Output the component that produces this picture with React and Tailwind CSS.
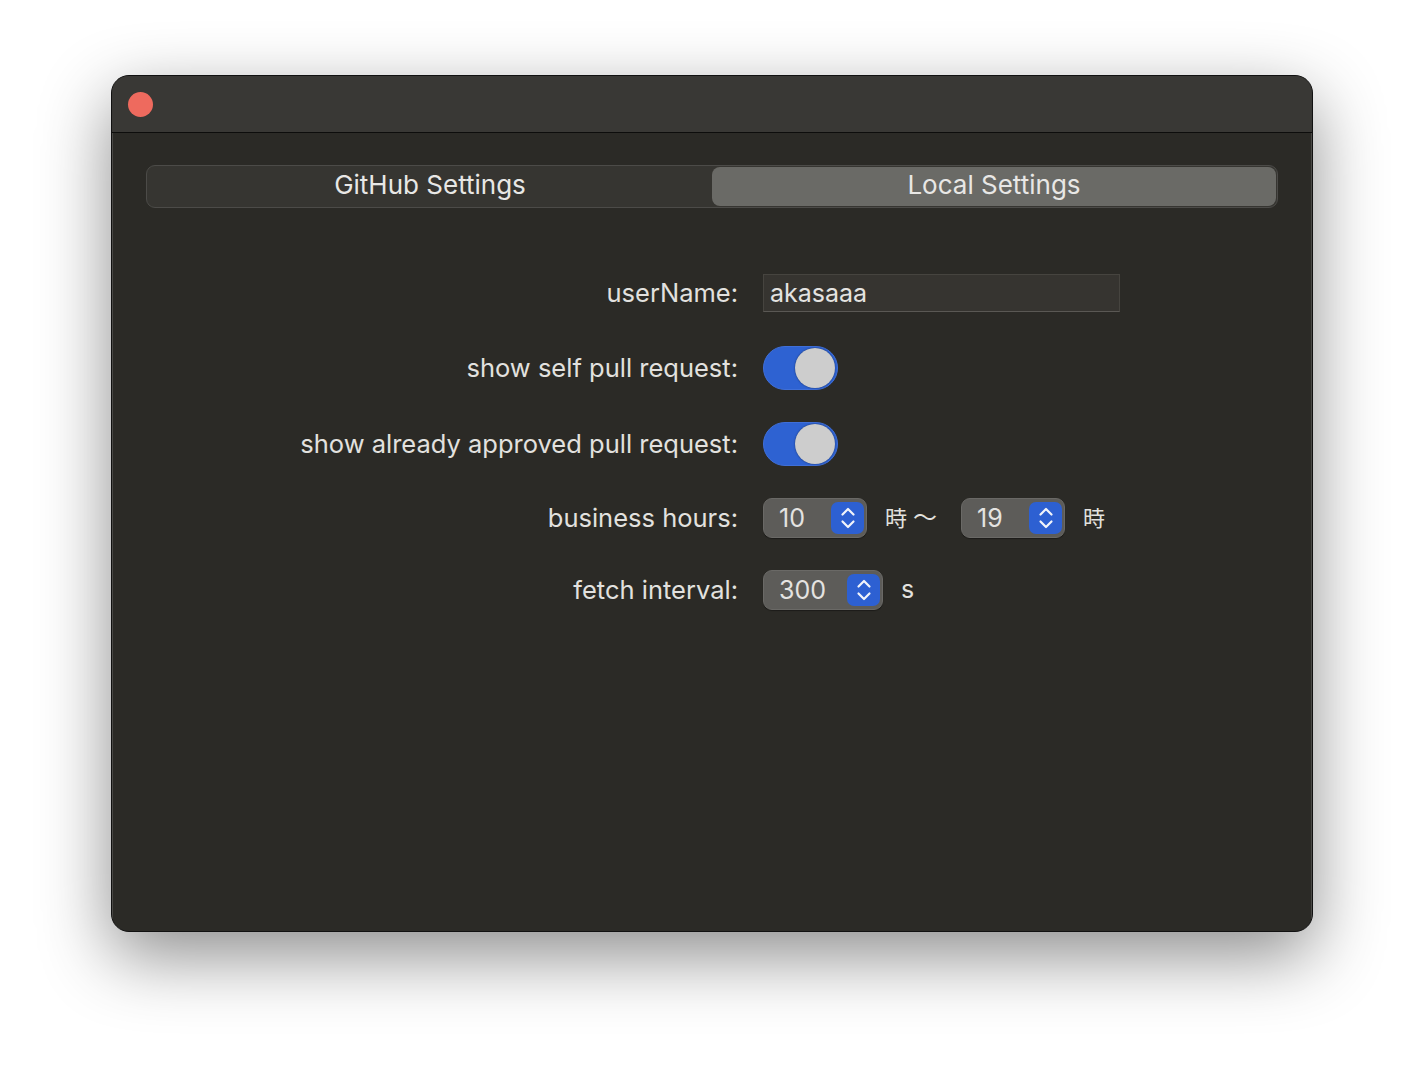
import { useState } from 'react';

function Toggle({ on, onChange }) {
  return (
    <button
      onClick={() => onChange(!on)}
      className={`w-[75px] h-[44px] rounded-full p-[2px] flex items-center border border-[#3f6fd8] ${on ? 'bg-[#2e62d2] justify-end' : 'bg-[#55534f] justify-start'}`}
    >
      <span className="w-[40px] h-[40px] rounded-full bg-[#cdcdcd] shadow-[0_0_2px_rgba(0,0,0,0.5)]" />
    </button>
  );
}

function Stepper({ value, width }) {
  return (
    <div
      className="h-[40px] rounded-[9px] bg-[#5d5c59] border border-[#6a6966] flex items-center pl-[15px] pr-[2px] justify-between shadow-[0_1px_1px_rgba(0,0,0,0.35)]"
      style={{ width }}
    >
      <span className="text-[25px] text-[#e4e3e1] leading-none">{value}</span>
      <span className="w-[33px] h-[32px] rounded-[7px] bg-[#2d60d2] flex items-center justify-center shrink-0">
        <svg width="16" height="26" viewBox="0 0 16 26" fill="none" stroke="#f2f4fa" strokeWidth="2.2" strokeLinecap="round" strokeLinejoin="round">
          <path d="M2.5 9.5 L8 4 L13.5 9.5" />
          <path d="M2.5 16.5 L8 22 L13.5 16.5" />
        </svg>
      </span>
    </div>
  );
}

export default function App() {
  const [tab, setTab] = useState('local');
  const [showSelf, setShowSelf] = useState(true);
  const [showApproved, setShowApproved] = useState(true);
  const [userName, setUserName] = useState('akasaaa');

  const labelCls = 'text-right text-[25.5px] text-[#e2e1df] pr-[25px]';

  return (
    <div className="w-[1424px] h-[1080px] bg-white flex justify-center pt-[75px]" style={{ fontFamily: 'Inter, "Noto Sans CJK JP", sans-serif' }}>
      <div className="w-[1202px] h-[857px] rounded-[18px] bg-[#2b2a26] border border-[#111] shadow-[0_24px_70px_rgba(0,0,0,0.45)] overflow-hidden flex flex-col">
        <div className="h-[57px] bg-[#393835] border-b border-[#0d0d0c] flex items-center pl-[16px] shrink-0">
          <span className="w-[25px] h-[25px] rounded-full bg-[#ee6a5e]" />
        </div>

        <div className="flex-1 border-x border-t-0 border-[#4a4946] px-[33px] pt-[32px]">
          <div className="h-[43px] rounded-[9px] bg-[#363531] border border-[#4c4b48] flex p-[1px]">
            <button
              onClick={() => setTab('github')}
              className={`flex-1 rounded-[8px] text-[26px] leading-none pb-[3px] text-[#e8e7e5] ${tab === 'github' ? 'bg-[#6a6a66]' : ''}`}
            >
              GitHub Settings
            </button>
            <button
              onClick={() => setTab('local')}
              className={`flex-1 rounded-[8px] text-[26px] leading-none pb-[3px] text-[#e8e7e5] ${tab === 'local' ? 'bg-[#6a6a66]' : ''}`}
            >
              Local Settings
            </button>
          </div>

          <div className="grid grid-cols-[617px_1fr] mt-[66px]">
            <div className={`${labelCls} h-[38px] flex items-center justify-end`}>userName:</div>
            <div className="h-[38px] flex items-center">
              <input
                value={userName}
                onChange={(e) => setUserName(e.target.value)}
                className="w-[357px] h-[38px] bg-[#363430] border border-[#46443f] border-b-[#5a5854] px-[6px] text-[25px] text-[#e4e3e1] outline-none"
              />
            </div>

            <div className={`${labelCls} h-[44px] mt-[34px] flex items-center justify-end`}>show self pull request:</div>
            <div className="h-[44px] mt-[34px] flex items-center">
              <Toggle on={showSelf} onChange={setShowSelf} />
            </div>

            <div className={`${labelCls} h-[44px] mt-[32px] flex items-center justify-end`}>show already approved pull request:</div>
            <div className="h-[44px] mt-[32px] flex items-center">
              <Toggle on={showApproved} onChange={setShowApproved} />
            </div>

            <div className={`${labelCls} h-[40px] mt-[32px] flex items-center justify-end`}>business hours:</div>
            <div className="h-[40px] mt-[32px] flex items-center text-[22px] text-[#e2e1df]">
              <Stepper value="10" width={104} />
              <span className="ml-[18px]">時</span>
              <span className="ml-[6px] text-[24px]">〜</span>
              <span className="ml-[24px]"><Stepper value="19" width={104} /></span>
              <span className="ml-[18px]">時</span>
            </div>

            <div className={`${labelCls} h-[40px] mt-[32px] flex items-center justify-end`}>fetch interval:</div>
            <div className="h-[40px] mt-[32px] flex items-center">
              <Stepper value="300" width={120} />
              <span className="ml-[18px] text-[25px] text-[#e2e1df]">s</span>
            </div>
          </div>
        </div>
      </div>
    </div>
  );
}
